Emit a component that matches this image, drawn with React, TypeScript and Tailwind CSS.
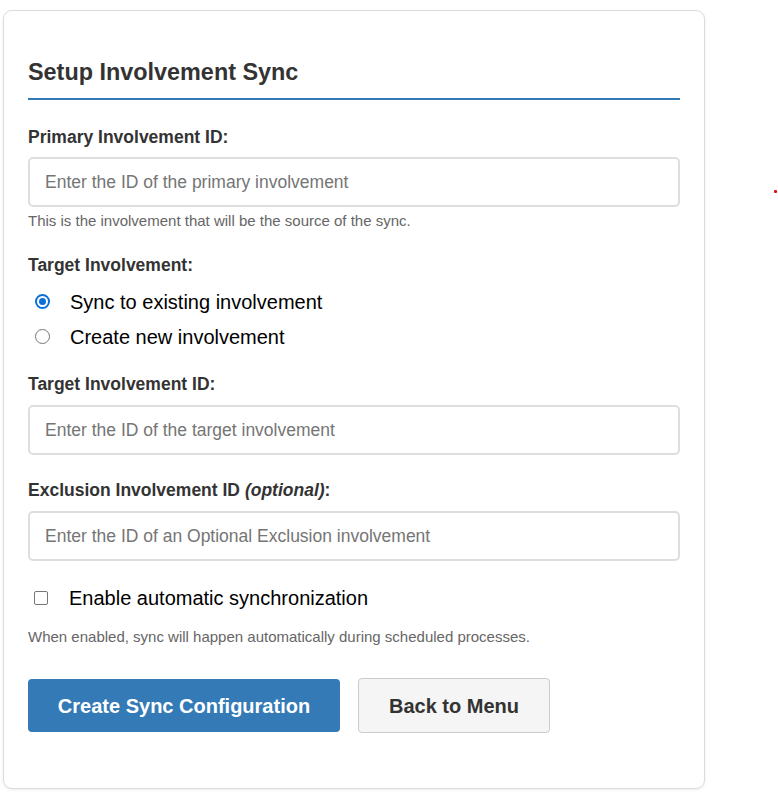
import React from "react";

function Radio({ checked }: { checked: boolean }) {
  return checked ? (
    <span className="flex h-[15px] w-[15px] shrink-0 items-center justify-center rounded-full border-2 border-[#0b6fd9] bg-white">
      <span className="block h-[7px] w-[7px] rounded-full bg-[#0b6fd9]" />
    </span>
  ) : (
    <span className="block h-[15px] w-[15px] shrink-0 rounded-full border border-[#767676] bg-white" />
  );
}

export default function App() {
  return (
    <div
      className="relative min-h-[793px] w-[778px] bg-white pt-[10px] text-[#333]"
      style={{ fontFamily: '"Liberation Sans", Arial, sans-serif' }}
    >
      <span className="absolute left-[774px] top-[190px] block h-[3px] w-[3px] rounded-[1px] bg-[#e01010]" />
      <div className="ml-[3px] flex h-[779px] w-[702px] flex-col rounded-[9px] border border-[#dcdcdc] bg-white px-[24px] pt-[47px] shadow-[0_1px_3px_rgba(0,0,0,0.08)]">
        <h2 className="border-b-2 border-[#337ab7] pb-[12px] text-[23.4px] font-bold leading-[28px] text-[#333]">
          Setup Involvement Sync
        </h2>

        <label className="mt-[27px] text-[17.5px] font-bold leading-[20px] text-[#333]">
          Primary Involvement ID:
        </label>
        <input
          className="mt-[10px] h-[50px] w-full rounded-[5px] border-2 border-[#dedede] px-[15px] text-[17.5px] placeholder:text-[#757575] outline-none"
          placeholder="Enter the ID of the primary involvement"
        />
        <p className="mt-[5px] text-[15px] leading-[18px] text-[#666]">
          This is the involvement that will be the source of the sync.
        </p>

        <label className="mt-[25px] text-[17.5px] font-bold leading-[20px] text-[#333]">
          Target Involvement:
        </label>
        <div className="mt-[9px] flex flex-col">
          <div className="flex h-[35px] items-center">
            <span className="ml-[7px] flex w-[35px] items-center">
              <Radio checked />
            </span>
            <span className="text-[20px] text-black">Sync to existing involvement</span>
          </div>
          <div className="flex h-[35px] items-center">
            <span className="ml-[7px] flex w-[35px] items-center">
              <Radio checked={false} />
            </span>
            <span className="text-[20px] text-black">Create new involvement</span>
          </div>
        </div>

        <label className="mt-[20px] text-[17.5px] font-bold leading-[20px] text-[#333]">
          Target Involvement ID:
        </label>
        <input
          className="mt-[11px] h-[50px] w-full rounded-[5px] border-2 border-[#dedede] px-[15px] text-[17.5px] placeholder:text-[#757575] outline-none"
          placeholder="Enter the ID of the target involvement"
        />

        <label className="mt-[25px] text-[17.5px] font-bold leading-[20px] text-[#333]">
          Exclusion Involvement ID <em>(optional)</em>:
        </label>
        <input
          className="mt-[11px] h-[50px] w-full rounded-[5px] border-2 border-[#dedede] px-[15px] text-[17.5px] placeholder:text-[#757575] outline-none"
          placeholder="Enter the ID of an Optional Exclusion involvement"
        />

        <div className="mt-[25px] flex h-[24px] items-center">
          <span className="ml-[6px] mr-[21px] block h-[14px] w-[14px] shrink-0 rounded-[2px] border border-[#767676] bg-white" />
          <span className="text-[20px] text-black">Enable automatic synchronization</span>
        </div>
        <p className="mt-[18px] text-[15px] leading-[18px] text-[#666]">
          When enabled, sync will happen automatically during scheduled processes.
        </p>

        <div className="mt-[32px] flex items-center gap-[18px]">
          <button className="h-[53px] w-[312px] rounded-[4px] bg-[#337ab7] text-[20px] font-bold text-white">
            Create Sync Configuration
          </button>
          <button className="h-[55px] w-[192px] rounded-[4px] border border-[#cccccc] bg-[#f5f5f5] text-[20px] font-bold text-[#333]">
            Back to Menu
          </button>
        </div>
      </div>
    </div>
  );
}
